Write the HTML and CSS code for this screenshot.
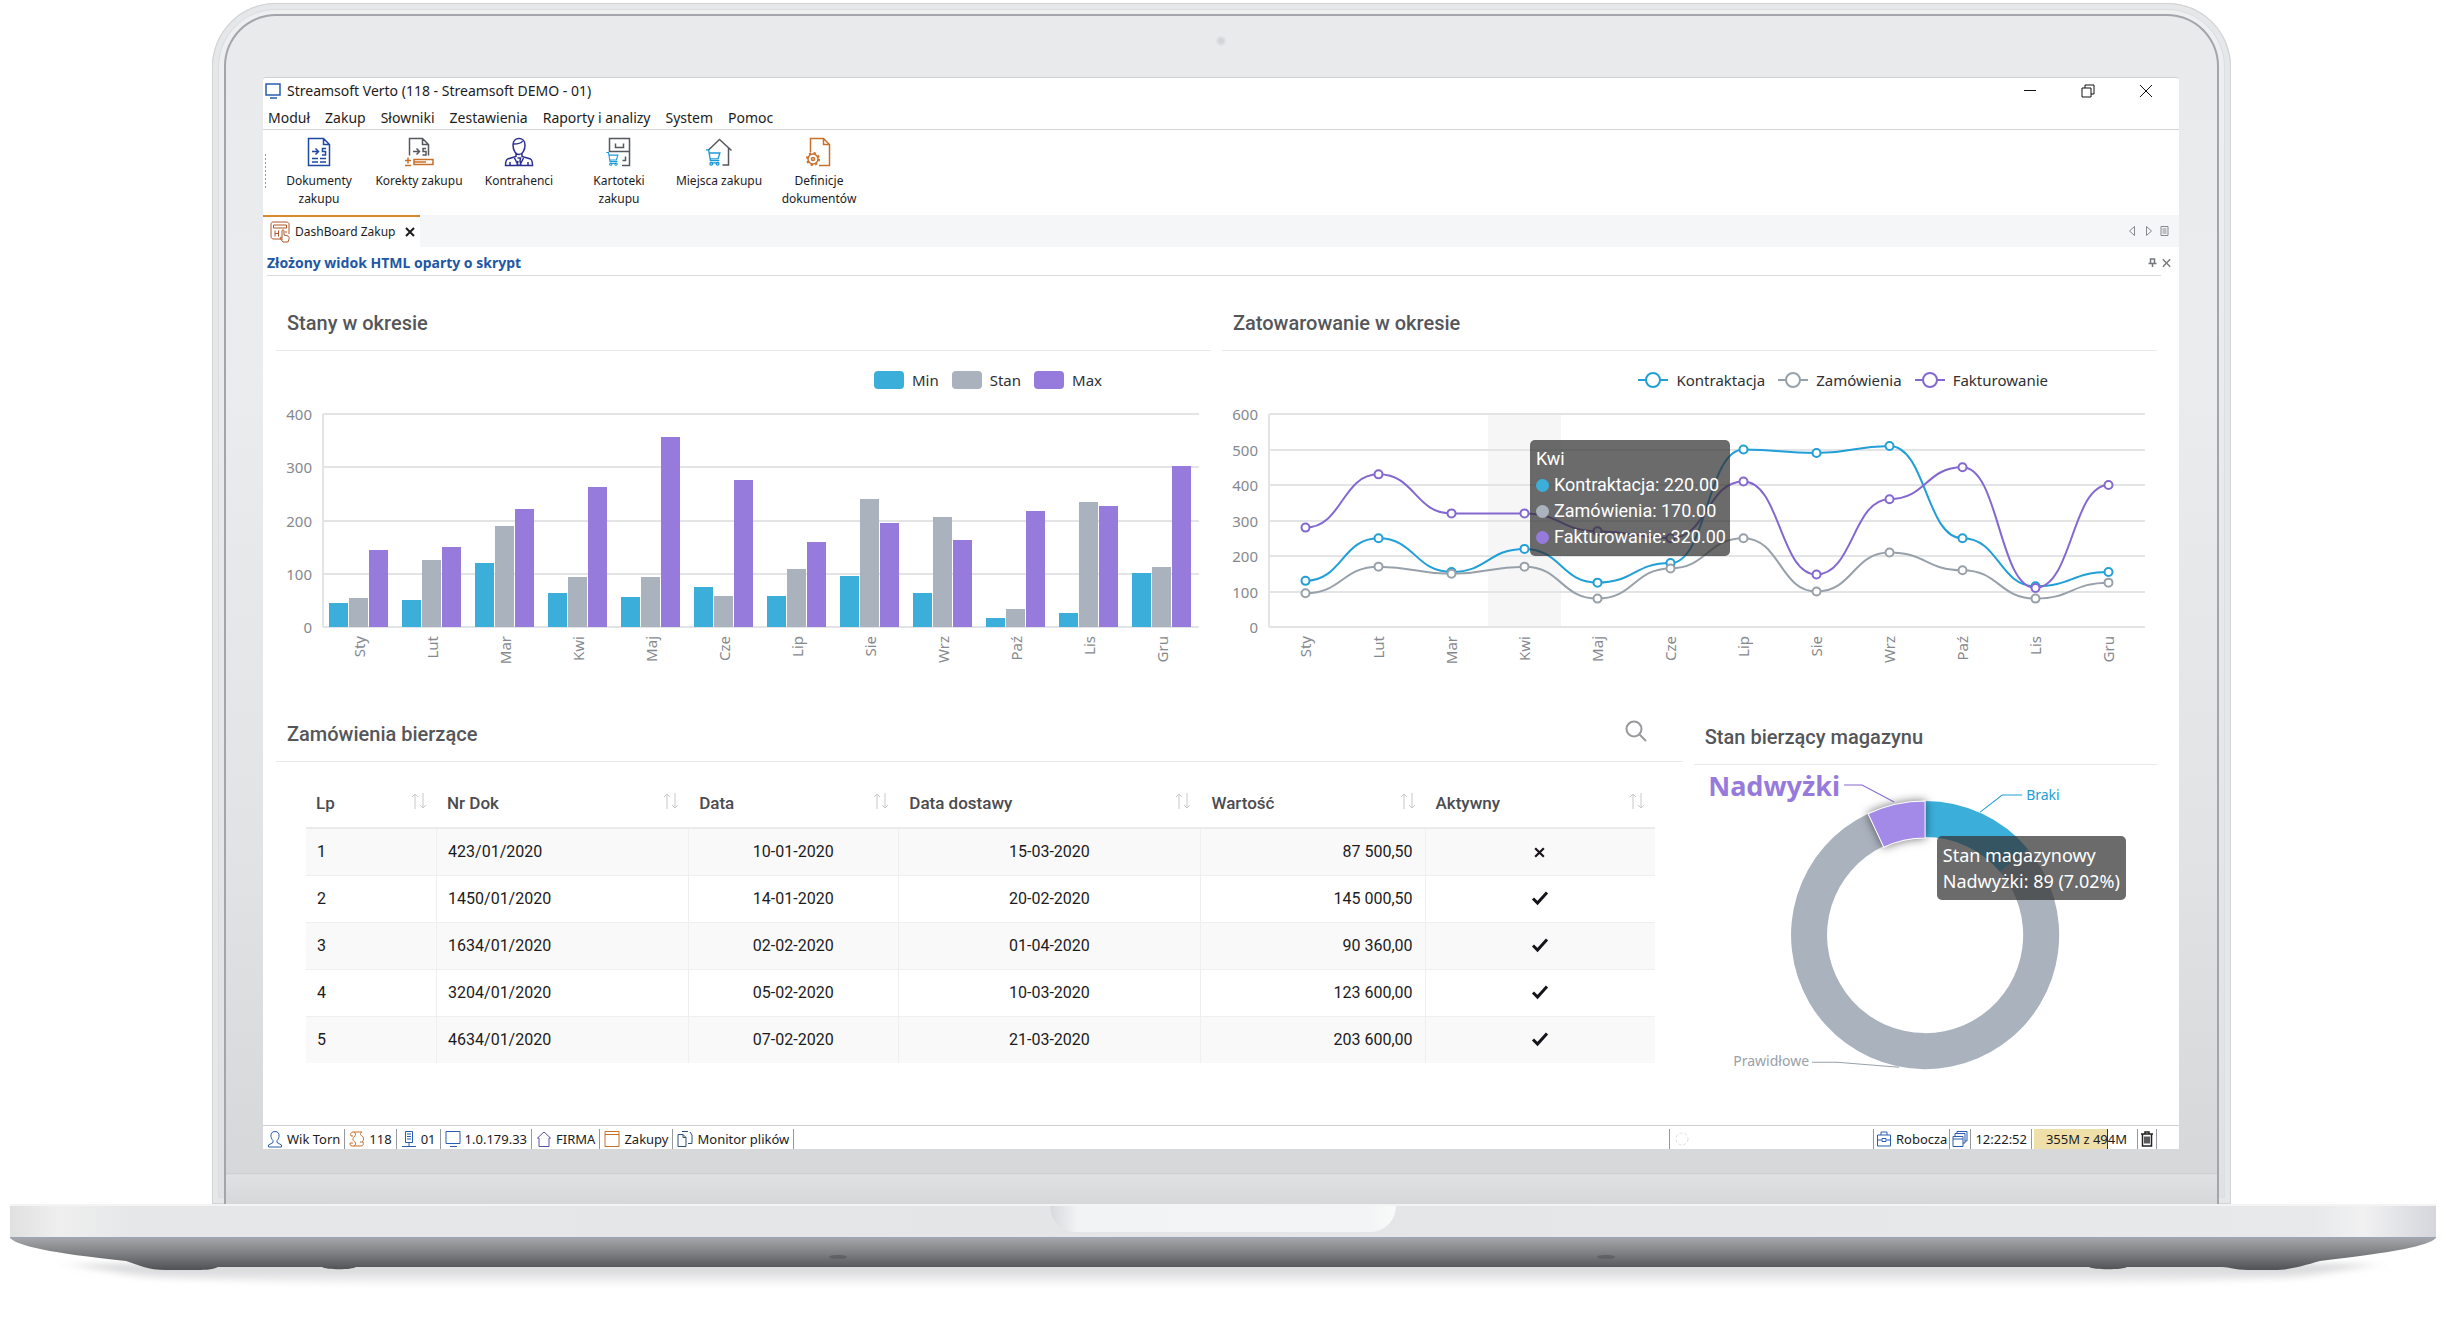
FILE: index.html
```
<!DOCTYPE html>
<html lang="pl">
<head>
<meta charset="utf-8">
<title>Streamsoft Verto</title>
<link rel="stylesheet" href="styles.css">
</head>
<body>
<svg class="defs" aria-hidden="true">
  <symbol id="cart" viewBox="0 0 20 20"><path d="M1 2h3l2 12h10M4.500 5.500h12l-2 6.500H5.500M6 16.500h9"/><circle cx="7" cy="17.500" r="1.500"/><circle cx="14" cy="17.500" r="1.500"/></symbol>
  <symbol id="sort" viewBox="0 0 16 18"><path d="M4 17V2M1 5l3-3 3 3M12 1v15M9 13l3 3 3-3"/></symbol>
  <symbol id="check" viewBox="0 0 18 16"><path d="M2 8.500l4.500 4.500L16 2.500"/></symbol>
  <symbol id="cross" viewBox="0 0 12 12"><path d="M2 2l8 8M10 2l-8 8"/></symbol>
</svg>
<main class="laptop">
  <div class="lid">
    <div class="bezel">
      <span class="camera"></span>
      <div class="screen">
        <header class="titlebar">
          <svg class="ico16 blue" viewBox="0 0 16 16"><path d="M1 1h14v11H1zM5 15h7"/></svg>
          <h1>Streamsoft Verto (118 - Streamsoft DEMO - 01)</h1>
          <div class="winbtns">
            <button aria-label="Minimalizuj"><svg viewBox="0 0 14 14"><path d="M1 6.500h12"/></svg></button>
            <button aria-label="Przywróć"><svg viewBox="0 0 14 14"><path d="M1 4h9v9H1zM4 4V1h9v9h-3"/></svg></button>
            <button aria-label="Zamknij"><svg viewBox="0 0 14 14"><path d="M1 1l12 12M13 1L1 13"/></svg></button>
          </div>
        </header>
        <nav class="menu">
          <a href="#">Moduł</a><a href="#">Zakup</a><a href="#">Słowniki</a><a href="#">Zestawienia</a><a href="#">Raporty i analizy</a><a href="#">System</a><a href="#">Pomoc</a>
        </nav>
        <div class="toolbar">
          <button><svg class="navy" viewBox="0 0 30 30"><path d="M4.500 1.500h15l6 6v21h-21zM19.500 1.500v6h6M8 14.500h6M11.500 11.500l3 3-3 3M22 11.500h-3.500v3H21.500v3.500H18M8 21.500h6M16 21.500h6M8 25h6M16 25h6"/></svg>Dokumenty zakupu</button>
          <button><svg class="grey" viewBox="0 0 30 30"><path d="M5.500 18.500v-17h13l6 6v11M18.500 1.500v6h6M9 14.500h6M12.500 11.500l3 3-3 3M22 11.500h-3v3H22v3.500H18.500"/><path class="orange" d="M1 23.500h6M4 20.500v6M1 28.500h6M10 22.500h19v5H10zM10 25h12"/></svg>Korekty zakupu</button>
          <button><svg class="indigo" viewBox="0 0 30 30"><path d="M9 8c0-4 2.500-6.500 6-6.500S21 4 21 8c0 5-2.500 9.500-6 9.500S9 13 9 8zM9.500 7c4 0 8-1 9-3M12 16.500v3L3.500 22c-1.500 1-2 3-2 6.500h27c0-3.500-.5-5.500-2-6.500L18 19.500v-3M10 20l4 8M20 20l-4 8M13.500 21h3l-.5 3 1 4.500M14 24l-1 4.500M6 28v-3M24 28v-3"/></svg>Kontrahenci</button>
          <button><svg class="grey" viewBox="0 0 30 30"><path d="M5.500 15V1.500h20v27H18M5.500 14.500h20M11.500 6.500v4h8v-4M18.500 23.500h3v-4"/><use class="sky" href="#cart" x="1" y="14" width="16" height="15"/></svg>Kartoteki zakupu</button>
          <button><svg class="grey" viewBox="0 0 30 30"><path d="M4 13.500L15.500 2.500l12 11M24.500 11v17H18.500"/><use class="sky" href="#cart" x="1" y="11" width="18" height="18"/></svg>Miejsca zakupu</button>
          <button><svg class="orange" viewBox="0 0 30 30"><path d="M6.500 15V1.500h13l6 6v21H15M19.500 1.500v6h6"/><circle cx="9" cy="22" r="5"/><circle cx="9" cy="22" r="1.500"/><circle cx="9" cy="22" r="6" stroke-dasharray="2.200 2.500" stroke-width="2"/></svg>Definicje dokumentów</button>
        </div>
        <div class="tabbar">
          <div class="tab">
            <svg class="rust" viewBox="0 0 20 22"><path d="M13 18H4c-2 0-3-1-3-3V3c0-1 1-2 2-2h13c2 0 3 1 3 2v10M3.500 4h13v3h-13zM5 9.500v6M8.500 9.500v6M5 12.500h3.500M12 17v-7c0-1.500 2-1.500 2 0v4l4 1c2 1 1 3 0 6h-5l-3-4c0-1 1-1 2 0M15 11h2"/></svg>
            <span>DashBoard Zakup</span>
            <button aria-label="Zamknij kartę"><svg viewBox="0 0 12 12"><use href="#cross"/></svg></button>
          </div>
          <div class="tabtools">
            <button aria-label="Poprzednia"><svg viewBox="0 0 10 12"><path d="M7 1.500v9L2 6z"/></svg></button>
            <button aria-label="Następna"><svg viewBox="0 0 10 12"><path d="M3 1.500v9L8 6z"/></svg></button>
            <button aria-label="Lista kart"><svg viewBox="0 0 10 12"><path d="M1.500 1.500h7v9h-7zM3 4h4M3 6h4M3 8h4"/></svg></button>
          </div>
        </div>
        <div class="viewhead">
          <h2>Złożony widok HTML oparty o skrypt</h2>
          <div class="viewtools">
            <button aria-label="Przypnij"><svg viewBox="0 0 10 12"><path d="M3 6V2h4v4M1 6.500h8M5 7v3"/></svg></button>
            <button aria-label="Zamknij widok"><svg viewBox="0 0 12 12"><use href="#cross"/></svg></button>
          </div>
        </div>

        <div class="row row-charts">
          <section class="panel">
            <header><h3>Stany w okresie</h3></header>
            <ul class="legend">
              <li><i class="swatch c-min"></i>Min</li><li><i class="swatch c-stan"></i>Stan</li><li><i class="swatch c-max"></i>Max</li>
            </ul>
            <svg id="bars" class="chart" viewBox="0 0 935 296" role="img" aria-label="Stany w okresie"></svg>
          </section>
          <section class="panel">
            <header><h3>Zatowarowanie w okresie</h3></header>
            <ul class="legend">
              <li><svg viewBox="0 0 30 18"><path class="l-kon" d="M0 9h30"/><circle class="l-kon" cx="15" cy="9" r="7"/></svg>Kontraktacja</li>
              <li><svg viewBox="0 0 30 18"><path class="l-zam" d="M0 9h30"/><circle class="l-zam" cx="15" cy="9" r="7"/></svg>Zamówienia</li>
              <li><svg viewBox="0 0 30 18"><path class="l-fak" d="M0 9h30"/><circle class="l-fak" cx="15" cy="9" r="7"/></svg>Fakturowanie</li>
            </ul>
            <div class="plot">
              <svg id="lines" class="chart" viewBox="0 0 935 296" role="img" aria-label="Zatowarowanie w okresie"></svg>
              <div class="tooltip tip-line">
                <p>Kwi</p>
                <p><i class="dot c-min"></i>Kontraktacja: 220.00</p>
                <p><i class="dot c-stan"></i>Zamówienia: 170.00</p>
                <p><i class="dot c-max"></i>Fakturowanie: 320.00</p>
              </div>
            </div>
          </section>
        </div>

        <div class="row row-data">
          <section class="panel">
            <header><h3>Zamówienia bierzące</h3>
              <button class="search" aria-label="Szukaj"><svg viewBox="0 0 22 22"><circle cx="9" cy="9" r="7.500"/><path d="M14.500 14.500L21 21"/></svg></button>
            </header>
            <table>
              <colgroup><col class="w-lp"><col class="w-nr"><col class="w-dt"><col class="w-dd"><col class="w-wa"><col class="w-ak"></colgroup>
              <thead><tr>
                <th>Lp<svg><use href="#sort"/></svg></th><th>Nr Dok<svg><use href="#sort"/></svg></th><th>Data<svg><use href="#sort"/></svg></th><th>Data dostawy<svg><use href="#sort"/></svg></th><th>Wartość<svg><use href="#sort"/></svg></th><th>Aktywny<svg><use href="#sort"/></svg></th>
              </tr></thead>
              <tbody>
                <tr><td>1</td><td>423/01/2020</td><td>10-01-2020</td><td>15-03-2020</td><td>87 500,50</td><td><svg class="no"><use href="#cross"/></svg></td></tr>
                <tr><td>2</td><td>1450/01/2020</td><td>14-01-2020</td><td>20-02-2020</td><td>145 000,50</td><td><svg class="yes"><use href="#check"/></svg></td></tr>
                <tr><td>3</td><td>1634/01/2020</td><td>02-02-2020</td><td>01-04-2020</td><td>90 360,00</td><td><svg class="yes"><use href="#check"/></svg></td></tr>
                <tr><td>4</td><td>3204/01/2020</td><td>05-02-2020</td><td>10-03-2020</td><td>123 600,00</td><td><svg class="yes"><use href="#check"/></svg></td></tr>
                <tr><td>5</td><td>4634/01/2020</td><td>07-02-2020</td><td>21-03-2020</td><td>203 600,00</td><td><svg class="yes"><use href="#check"/></svg></td></tr>
              </tbody>
            </table>
          </section>
          <section class="panel panel-stock">
            <header><h3>Stan bierzący magazynu</h3></header>
            <div class="plot">
              <svg id="donut" class="chart" viewBox="0 0 463 360" role="img" aria-label="Stan bierzący magazynu"></svg>
              <div class="tooltip tip-donut"><p>Stan magazynowy</p><p>Nadwyżki: 89 (7.02%)</p></div>
            </div>
          </section>
        </div>

        <footer class="status">
          <span><svg class="blue" viewBox="0 0 16 18"><path d="M8 1.500c-3 0-4.500 2-4 5 .3 2 1 3 2 4v2L1.500 15v2h13v-2L10 12.500v-2c1-1 1.700-2 2-4 .5-3-1-5-4-5z"/></svg>Wik Torn</span>
          <span><svg class="orange" viewBox="0 0 16 18"><path d="M4 6H2c-1-2 0-4 2-4h9c-2 1-2 3 0 4s2 5 0 6M5 2c2 1 2 3 0 5-2 2-1 4 1 5 1 1 1 3-1 4h7c2 0 3-2 2-4H11M5 16H3c-2 0-2-2-2-3h3"/></svg>118</span>
          <span><svg class="blue" viewBox="0 0 16 18"><path d="M4.500 1.500h7v11h-7zM6 4h4M6 6.500h4M6 9h4M8 12.500V16M1 16.500h14"/></svg>01</span>
          <span><svg class="blue" viewBox="0 0 16 18"><path d="M1 1.500h14v12H1zM5 16.500h7"/></svg>1.0.179.33</span>
          <span><svg class="violet" viewBox="0 0 16 18"><path d="M1.500 8L8 2l6.500 6H13v8.500H3V8z"/></svg>FIRMA</span>
          <span><svg class="orange" viewBox="0 0 16 18"><path d="M1 1.500h14v15H1zM1 4.500h14"/></svg>Zakupy</span>
          <span><svg class="steel" viewBox="0 0 16 18"><path d="M1 4.500h5l3 3v9H1zM6 4.500v3h3M5 1.500h6M13 2l2 3v8.500h-4"/></svg>Monitor plików</span>
          <span class="fill"></span>
          <span class="busy"><svg viewBox="0 0 16 18"><circle cx="8" cy="9" r="6" stroke-dasharray="3 2"/></svg></span>
          <span class="tight"><svg class="blue" viewBox="0 0 16 18"><path d="M1.500 5h13v11h-13zM5 5V2h6v3M1.500 10h4M10.500 10h4M6 8.500h4v3H6z"/></svg>Robocza</span>
          <span class="tight"><svg class="blue" viewBox="0 0 16 18"><path d="M1 6.500h10v10H1zM1 9h10M3 6V3.500h10V13h-2M5 3V1.500h10V11h-2"/></svg></span>
          <span>12:22:52</span>
          <span class="memory">355M z 494M</span>
          <span class="tight"><button aria-label="Opróżnij pamięć"><svg viewBox="0 0 14 18"><path d="M1 4h12M5 4V2h4v2M2.500 4v12h9V4M5 6.500v7M7 6.500v7M9 6.500v7"/></svg></button></span>
        </footer>
      </div>
      <div class="hinge"></div>
    </div>
  </div>
  <div class="deck"><div class="notch"></div></div>
  <svg class="underside" viewBox="0 0 2426 60" preserveAspectRatio="none" aria-hidden="true">
    <defs>
      <linearGradient id="metal" x2="0" y2="1"><stop offset="0" stop-color="#a4a6ab"/><stop offset=".45" stop-color="#808285"/><stop offset="1" stop-color="#505154"/></linearGradient>
      <linearGradient id="shade" x2="0" y2="1"><stop offset="0" stop-color="#d3d4d6"/><stop offset=".5" stop-color="#e2e2e4"/><stop offset="1" stop-color="#fff"/></linearGradient>
      <filter id="soft" x="-5%" y="-50%" width="110%" height="200%"><feGaussianBlur stdDeviation="12 3"/></filter>
    </defs>
    <path d="M60 26h2306l-80 14-220 8H360l-220-8z" fill="url(#shade)" filter="url(#soft)"/>
    <path d="M0 0h2426c-8 8-40 14-116 23-18 5-30 9-46 9h-26c-14 0-18-3-26-3h-95c-4 3-34 3-38 0H346c-4 3-30 3-34 0h-104c-6 3-14 3-26 3h-26c-18 0-28-5-40-9C40 15 8 8 0 0z" fill="url(#metal)"/>
    <ellipse cx="828" cy="19" rx="9" ry="2" fill="#606164"/><ellipse cx="1596" cy="19" rx="9" ry="2" fill="#606164"/>
  </svg>
</main>
<script src="charts.js"></script>
</body>
</html>
```
FILE: styles.css
```
* { box-sizing: border-box; margin: 0; padding: 0; }
body { background: #fff; color: #1c1c1e; font: 14px/20px "Noto Sans", "Open Sans", sans-serif; }
button { background: none; border: 0; font: inherit; color: inherit; display: inline-flex; align-items: center; justify-content: center; }
svg { fill: none; stroke: currentColor; flex: none; }
ul { list-style: none; }
a { color: inherit; text-decoration: none; }
.defs { position: absolute; width: 0; height: 0; }

.blue { color: #2a5db0; }
.navy { color: #1f4aa3; }
.indigo { color: #2b2f93; }
.violet { color: #5a4fb0; }
.steel { color: #2c5079; }
.grey { color: #55585e; }
.orange { color: #c8702a; stroke: #c8702a; }
.sky { color: #1c9ad8; stroke: #1c9ad8; }
.rust { color: #b0562a; }

/* laptop */
.laptop { padding: 3px 14px 0 10px; }
.lid { margin: 0 205px 0 202px; padding: 11px 12px 0; border-radius: 64px 64px 0 0; background: linear-gradient(#eeeff0, #e0e1e2); box-shadow: inset 0 0 0 1px #d2d3d5, inset 0 0 0 6px #e6e7e8, inset 0 0 0 7px #dcdde0; }
.bezel { border: 2px solid #a3a5aa; border-bottom: 0; border-radius: 52px 52px 0 0; padding: 0 38px 0 37px; background: linear-gradient(#e9eaec, #ebecee 30%, #e2e3e5 70%, #d5d6d8); display: flex; flex-direction: column; }
.camera { width: 10px; height: 10px; border-radius: 50%; background: #d3d4d8; border: 2px solid #dfe0e3; margin: 20px auto 31px; }
.screen { background: #fff; border-top: 1px solid #cfd0d3; border-radius: 3px 3px 0 0; }
.hinge { height: 55px; margin: 0 -38px 0 -37px; background: linear-gradient(transparent 24px, #c9cacc 24px, #e0e1e2 26px, #d6d7d9); }
.deck { height: 34px; background: linear-gradient(90deg, #e0e0e1, #efefef 2%, #e6e7e9 5%, #e4e5e7 50%, #e8e9eb 95%, #f1f1f2 97%, #d5d6dc); border-top: 2px solid #f4f4f5; border-bottom: 1px solid #9aa5b5; border-radius: 2px 2px 0 0; }
.notch { width: 346px; height: 26px; margin: 0 auto; border-radius: 0 0 28px 28px; background: linear-gradient(90deg, #d8d9dc, #f2f3f4 8%, #f3f4f5 92%, #fafafa); }
.underside { display: block; width: 100%; height: 60px; stroke: none; }

/* window chrome */
.titlebar { display: flex; align-items: center; gap: 6px; height: 28px; padding: 0 4px 2px 2px; }
.titlebar h1 { font-weight: 400; font-size: 14px; flex: 1; }
.ico16 { width: 16px; height: 16px; stroke-width: 1.5; }
.winbtns { display: flex; }
.winbtns button { width: 58px; height: 26px; }
.winbtns svg { width: 14px; height: 14px; color: #111; }
.menu { display: flex; gap: 15px; padding: 2px 5px 1px; border-bottom: 1px solid #d4d5d7; }
.toolbar { display: flex; height: 85px; padding: 7px 0 0 2px; }
.toolbar::before { content: ""; width: 1px; height: 36px; margin: 17px 3px 0 0; background: repeating-linear-gradient(#999 0 2px, transparent 2px 4px); }
.toolbar button { width: 100px; flex-direction: column; justify-content: flex-start; gap: 5px; font-size: 12px; line-height: 18px; padding: 0 8px; }
.toolbar svg { width: 30px; height: 30px; stroke-width: 1.5; }
.toolbar button:nth-child(2), .toolbar button:nth-child(5) { padding: 0; }
.tabbar { display: flex; justify-content: space-between; height: 32px; background: #f5f6f7; }
.tab { display: flex; align-items: center; gap: 5px; padding: 0 4px 0 7px; border-top: 2px solid #d68a2c; background: #fff; font-size: 12px; }
.tab > svg { width: 20px; height: 22px; }
.tab button svg { width: 12px; height: 12px; stroke-width: 2; margin: 0 0 0 4px; }
.tabtools { display: flex; align-items: center; gap: 5px; padding-right: 9px; color: #85888c; }
.tabtools svg, .viewtools svg { width: 11px; height: 12px; }
.viewhead { display: flex; justify-content: space-between; align-items: center; height: 29px; margin: 0 18px 0 4px; padding-top: 4px; border-bottom: 1px solid #d9dadb; }
.viewhead h2 { font-size: 14px; color: #1e57a6; }
.viewtools { display: flex; gap: 3px; margin-right: -11px; color: #74777c; }
.viewtools svg { stroke-width: 1.5; }

/* dashboard */
.row { display: grid; gap: 11px; padding: 0 22px 0 13px; }
.row-charts { grid-template-columns: 1fr 1fr; }
.row-data { grid-template-columns: 1406fr 463fr; }
.panel header { display: flex; justify-content: space-between; padding: 36px 27px 16px 11px; border-bottom: 1px solid #e8e9ea; }
.panel h3 { font: 500 20px/22px Roboto, sans-serif; color: #55565a; }
.panel-stock { padding-top: 3px; }
.search { height: 22px; color: #97999d; }
.search svg { width: 22px; height: 22px; stroke-width: 2; margin: -6px 9px 0 0; }
.chart { display: block; width: 100%; }
.plot { position: relative; }
.legend { display: flex; justify-content: flex-end; gap: 13px; padding: 18px 109px 0 0; font-size: 15px; line-height: 22px; color: #2f3033; }
.legend li { display: flex; align-items: center; gap: 8px; }
.legend svg { width: 30px; height: 18px; stroke-width: 2; }
.legend circle { fill: #fff; }
.swatch { width: 30px; height: 18px; border-radius: 4px; }
.c-min { background: #3bafda; fill: #3bafda; }
.c-stan { background: #aab2bd; fill: #aab2bd; }
.c-max { background: #967adc; fill: #967adc; }
.l-kon { stroke: #219fd6; }
.l-zam { stroke: #98a1a9; }
.l-fak { stroke: #8368d0; }
.chart text { stroke: none; fill: #85898e; font-size: 15px; }
.chart .grid { stroke: #e2e4e6; stroke-width: 2; }
.chart .line { stroke-width: 2; }
.chart .mark { fill: #fff; stroke-width: 2; }
.chart .band { fill: #f6f6f7; stroke: none; }
.chart rect { stroke: none; }
.chart .big { font-size: 27px; font-weight: 700; fill: #967adc; }
.chart .t-kon { fill: #219fd6; font-size: 14px; }
.chart .t-zam { fill: #98a1a9; font-size: 14px; }
.tooltip { position: absolute; border-radius: 5px; background: rgba(50, 50, 50, .72); color: #fff; line-height: 26px; padding: 6px; white-space: nowrap; }
.tip-line { left: 308px; top: 49px; padding-right: 4px; font: 18px/26px Roboto, sans-serif; }
.tip-donut { left: 243px; top: 71px; font-size: 18px; }
.dot { display: inline-block; width: 13px; height: 13px; border-radius: 50%; margin-right: 5px; vertical-align: -1px; }

table { width: calc(100% - 58px); margin: 0 28px 0 30px; border-collapse: separate; border-spacing: 0; table-layout: fixed; font: 16px/22px Roboto, sans-serif; }
.w-lp { width: 131px; } .w-nr { width: 252px; } .w-dt { width: 210px; } .w-dd { width: 302px; } .w-wa { width: 224px; } .w-ak { width: 229px; }
th { padding: 30px 10px 13px; text-align: left; font: 500 17px/22px Roboto, sans-serif; color: #4b4c50; border-bottom: 2px solid #e9ebec; }
th svg { float: right; width: 16px; height: 18px; color: #c6c8ca; }
td { padding: 12px 12px 12px 11px; border-bottom: 1px solid #efefef; border-right: 1px solid #efeff0; color: #1b1b1d; }
td:last-child { border-right: 0; }
tr:last-child td { border-bottom: 0; }
tbody tr:nth-child(odd) { background: #f9f9fa; }
td:nth-child(3), td:nth-child(4), td:nth-child(6) { text-align: center; }
td:nth-child(5) { text-align: right; }
.yes, .no { vertical-align: -2px; color: #17131a; }
.yes { width: 18px; height: 16px; stroke-width: 3; }
.no { width: 13px; height: 13px; stroke-width: 2; }

/* status bar */
.status { display: flex; align-items: stretch; border-top: 1px solid #cfd0d3; padding: 3px 22px 0 0; font-size: 13px; line-height: 20px; }
.status span { display: flex; align-items: center; gap: 4px; padding: 0 4px; border-right: 1px solid #96999e; }
.status .tight { padding: 0 2px; }
.status svg { width: 16px; height: 18px; }
.status .fill { flex: 1; }
.status .busy { width: 204px; color: #dfe0e1; }
.status .memory { width: 106px; justify-content: flex-end; padding-right: 10px; background: linear-gradient(90deg, transparent 2px, #efdfa8 2px 75px, #333 75px 76px, transparent 76px); }
.status button svg { width: 14px; color: #222; stroke-width: 1.5; }
```
FILE: charts.js
```
const NS = "http://www.w3.org/2000/svg";
const months = ["Sty", "Lut", "Mar", "Kwi", "Maj", "Cze", "Lip", "Sie", "Wrz", "Paź", "Lis", "Gru"];
const plot = { left: 47, right: 923, top: 23, bottom: 236 };
const step = (plot.right - plot.left) / 12;

function add(svg, name, attrs, text) {
  const el = document.createElementNS(NS, name);
  for (const key in attrs) el.setAttribute(key, attrs[key]);
  if (text) el.textContent = text;
  svg.appendChild(el);
  return el;
}

function axes(svg, max, every) {
  for (let v = 0; v <= max; v += every) {
    const y = Math.round(plot.bottom - v / max * (plot.bottom - plot.top));
    add(svg, "path", { class: "grid", d: `M${plot.left} ${y}H${plot.right}` });
    add(svg, "text", { x: plot.left - 11, y: y + 6, "text-anchor": "end" }, String(v));
  }
  add(svg, "path", { class: "grid", d: `M${plot.left} ${plot.top}V${plot.bottom}` });
  months.forEach((m, i) => {
    const x = Math.round(plot.left + (i + .5) * step) + 5;
    add(svg, "text", { transform: `translate(${x} 245) rotate(-90)`, "text-anchor": "end" }, m);
  });
}

const bars = document.getElementById("bars");
axes(bars, 400, 100);
[["c-min", [45, 50, 121, 63, 56, 76, 58, 95, 63, 17, 27, 102]],
 ["c-stan", [55, 126, 189, 93, 93, 59, 108, 241, 206, 33, 235, 113]],
 ["c-max", [145, 151, 221, 262, 356, 276, 159, 195, 163, 217, 228, 302]]
].forEach(([cls, data], s) => data.forEach((v, i) => {
  const h = Math.round(v / 400 * 213);
  add(bars, "rect", { class: cls, x: Math.round(plot.left + i * step) + 6 + s * 20, y: plot.bottom - h, width: 19, height: h });
}));

const lines = document.getElementById("lines");
add(lines, "rect", { class: "band", x: plot.left + 3 * step, y: plot.top, width: step, height: 213 });
axes(lines, 600, 100);
[["l-kon", [130, 250, 155, 220, 125, 180, 500, 490, 510, 250, 115, 155]],
 ["l-zam", [95, 170, 150, 170, 80, 165, 250, 100, 210, 160, 80, 125]],
 ["l-fak", [280, 430, 320, 320, 270, 250, 410, 148, 360, 450, 110, 400]]
].forEach(([cls, data]) => {
  const pts = data.map((v, i) => [plot.left + (i + .5) * step, plot.bottom - v / 600 * 213]);
  let d = `M${pts[0]}`;
  for (let i = 1; i < pts.length; i++) {
    const mid = (pts[i - 1][0] + pts[i][0]) / 2;
    d += `C${mid} ${pts[i - 1][1]} ${mid} ${pts[i][1]} ${pts[i]}`;
  }
  add(lines, "path", { class: "line " + cls, d });
  pts.forEach(p => add(lines, "circle", { class: "mark " + cls, cx: p[0], cy: p[1], r: 4 }));
});

const donut = document.getElementById("donut");
const cx = 231, cy = 170;
function slice(from, to, outer, inner, attrs) {
  const pt = (deg, r) => {
    const a = deg * Math.PI / 180;
    return `${cx + r * Math.sin(a)} ${cy - r * Math.cos(a)}`;
  };
  const large = to - from > 180 ? 1 : 0;
  add(donut, "path", Object.assign({
    stroke: "none",
    d: `M${pt(from, outer)}A${outer} ${outer} 0 ${large} 1 ${pt(to, outer)}L${pt(to, inner)}A${inner} ${inner} 0 ${large} 0 ${pt(from, inner)}z`
  }, attrs));
}
slice(0, 50, 134, 98, { class: "c-min" });
slice(50, 334.8, 134, 98, { class: "c-stan" });
slice(334.8, 360, 134, 97, { fill: "#a48ae8", stroke: "#fff", style: "filter: drop-shadow(0 0 5px rgba(0,0,0,.55))" });
add(donut, "path", { class: "l-fak", d: "M150 20h18l32 17" });
add(donut, "path", { class: "l-kon", d: "M286 47l22-17h20" });
add(donut, "path", { class: "l-zam", d: "M118 297h25l62 5" });
add(donut, "text", { class: "big", x: 146, y: 31, "text-anchor": "end" }, "Nadwyżki");
add(donut, "text", { class: "t-kon", x: 332, y: 35 }, "Braki");
add(donut, "text", { class: "t-zam", x: 115, y: 301, "text-anchor": "end" }, "Prawidłowe");
```
